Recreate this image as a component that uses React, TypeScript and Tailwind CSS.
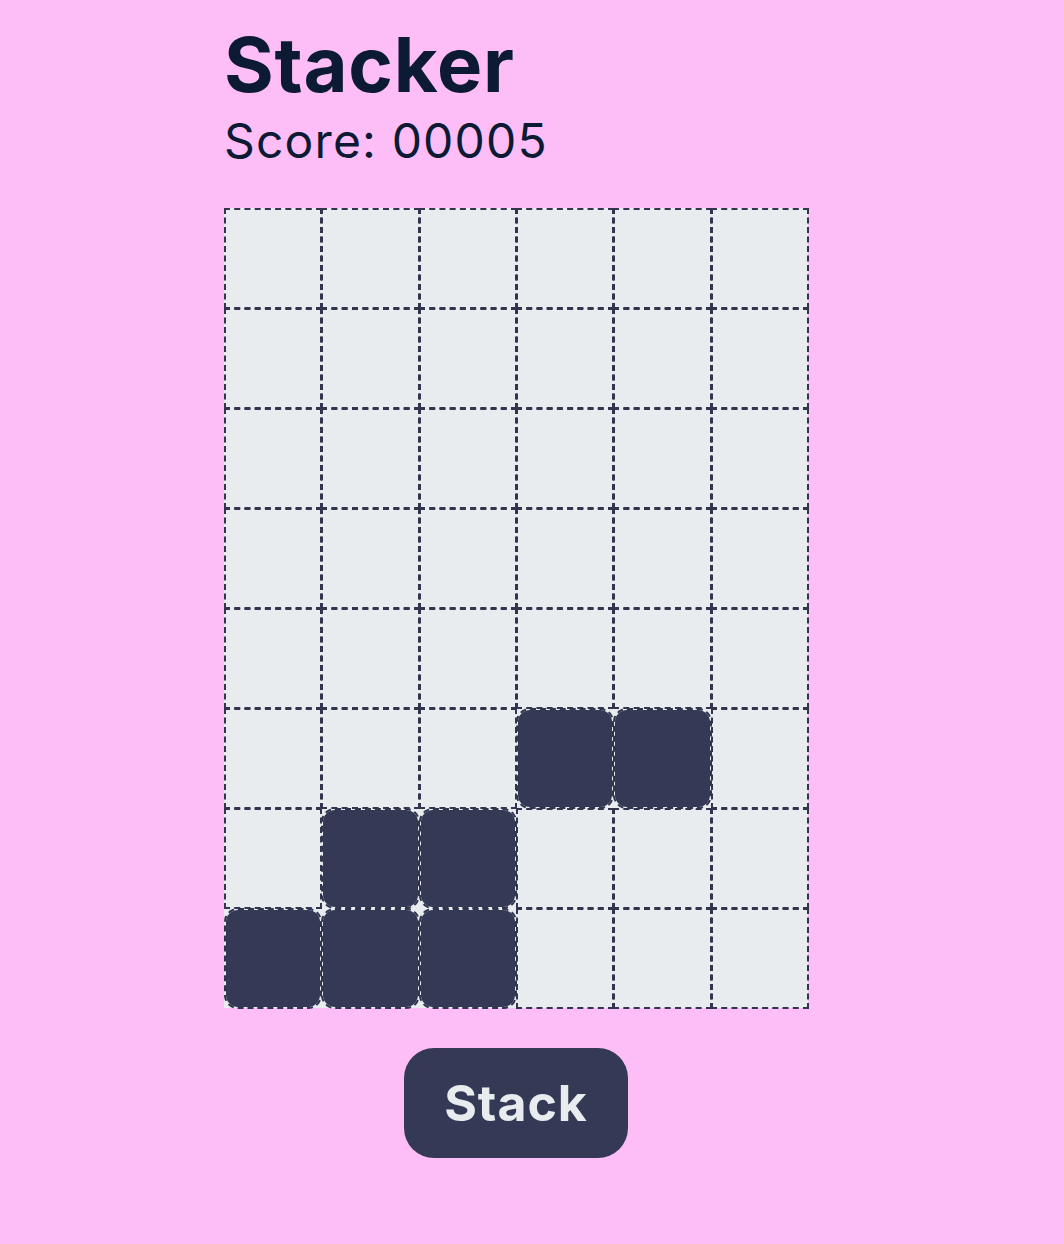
import React from "react";

// 8 rows x 6 columns, 1 marks a stacked block
const BOARD: number[][] = [
  [0, 0, 0, 0, 0, 0],
  [0, 0, 0, 0, 0, 0],
  [0, 0, 0, 0, 0, 0],
  [0, 0, 0, 0, 0, 0],
  [0, 0, 0, 0, 0, 0],
  [0, 0, 0, 1, 1, 0],
  [0, 1, 1, 0, 0, 0],
  [1, 1, 1, 0, 0, 0],
];

function Cell({ filled }: { filled: boolean }) {
  if (filled) {
    return (
      <div className="-mr-px -mb-px h-[101px] rounded-[14px] border-2 border-dashed border-[#31354d] bg-[#343a55] bg-clip-padding" />
    );
  }
  return <div className="-mr-px -mb-px h-[101px] border-2 border-dashed border-[#31354d]" />;
}

export default function App() {
  const score = 5;
  return (
    <div
      className="min-h-[1244px] w-full bg-[#fdbef8] pl-[224px] pt-[26px] text-[#0d1a33]"
      style={{ fontFamily: "Inter, 'Liberation Sans', sans-serif" }}
    >
      <h1 className="text-[76px] font-bold leading-none tracking-[0.01em]">Stacker</h1>
      <p className="mt-[15px] text-[48px] leading-none tracking-[0.024em]">
        Score: {String(score).padStart(5, "0")}
      </p>

      <div className="mt-[43px] w-[584px]">
        <div className="grid grid-cols-6 bg-[#e9ecef]">
          {BOARD.flatMap((row, r) =>
            row.map((v, c) => <Cell key={`${r}-${c}`} filled={v === 1} />)
          )}
        </div>

        <div className="mt-10 flex justify-center">
          <button className="rounded-[30px] bg-[#343a55] px-10 py-[30px] text-[50px] font-bold leading-none tracking-[0.02em] text-[#e9ecef]">
            Stack
          </button>
        </div>
      </div>
    </div>
  );
}
